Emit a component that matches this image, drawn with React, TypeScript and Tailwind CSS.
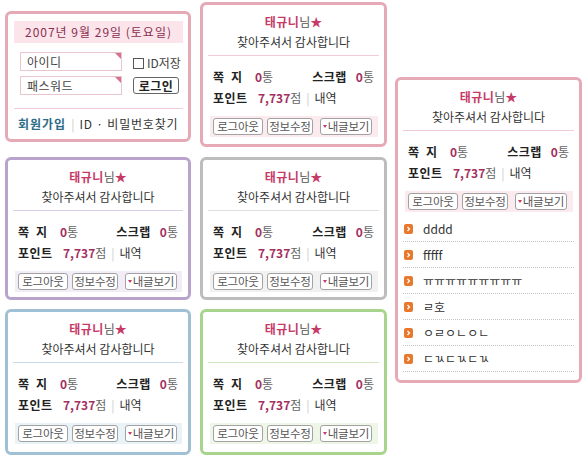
import React from "react";

type Theme = { border: string; divider: string; tint: string };

const themes: Record<string, Theme> = {
  pink: { border: "border-[#e6a9b6]", divider: "bg-[#f1ccd5]", tint: "bg-[#fbeaee]" },
  purple: { border: "border-[#b9a3cd]", divider: "bg-[#d9cfe4]", tint: "bg-[#f1ecf6]" },
  gray: { border: "border-[#bdbdbd]", divider: "bg-[#dedede]", tint: "bg-[#f1f1f1]" },
  blue: { border: "border-[#a0c1d5]", divider: "bg-[#c7dce8]", tint: "bg-[#e9f2f7]" },
  green: { border: "border-[#a9d48d]", divider: "bg-[#d0e7c0]", tint: "bg-[#eef7e7]" },
};

const posts = ["dddd", "fffff", "ㅠㅠㅠㅠㅠㅠㅠㅠㅠ", "ㄹ호", "ㅇㄹㅇㄴㅇㄴ", "ㄷㄳㄷㄳㄷㄳ"];

function SmallButton({ children, className }: { children: React.ReactNode; className?: string }) {
  return (
    <div
      className={`flex h-[17px] items-center justify-center whitespace-nowrap rounded-[3px] border border-[#a2a2a2] bg-white text-[11.5px] leading-none tracking-[-0.2px] text-[#555] ${className ?? ""}`}
    >
      {children}
    </div>
  );
}

function Bullet() {
  return (
    <svg width="9" height="10" viewBox="0 0 9 10" className="shrink-0">
      <rect x="0" y="0" width="9" height="10" rx="2" fill="#e8782c" />
      <path d="M3.5 3 L5.5 5 L3.5 7" stroke="#fff" strokeWidth="1.2" fill="none" />
    </svg>
  );
}

function Profile({ t }: { t: Theme }) {
  return (
    <>
      <div className="pt-[9px] text-center leading-4">
        <div>
          <span className="font-bold tracking-[0.5px] text-[#c63a68]">태규니</span>
          <span className="text-[#555]">님</span>
          <span className="text-[#c63a68]">★</span>
        </div>
        <div className="mt-1 text-[#333]">찾아주셔서 감사합니다</div>
      </div>
      <div className={`mx-[5px] mt-[5px] h-px ${t.divider}`} />
      <div className="mt-[13px] flex justify-between px-[10px] leading-4">
        <div className="flex">
          <span className="w-[42px] font-bold tracking-[0.5px] text-[#222]">쪽&nbsp;&nbsp;지</span>
          <span className="font-bold text-[#a3305f]">0</span>
          <span className="text-[#666]">통</span>
        </div>
        <div className="flex">
          <span className="font-bold tracking-[0.5px] text-[#222]">스크랩</span>
          <span className="ml-[9px] font-bold text-[#a3305f]">0</span>
          <span className="text-[#666]">통</span>
        </div>
      </div>
      <div className="mt-[5px] flex px-[10px] leading-4">
        <span className="w-[45px] font-bold tracking-[0.5px] text-[#222]">포인트</span>
        <span className="font-bold text-[#a3305f]">7,737</span>
        <span className="text-[#666]">점</span>
        <span className="mx-[5px] text-[#ccc]">|</span>
        <span className="text-[#333]">내역</span>
      </div>
      <div className={`ml-[7px] mr-[6px] mt-[10px] flex h-[21px] items-center pl-[3px] ${t.tint}`}>
        <SmallButton className="w-[50px]">로그아웃</SmallButton>
        <SmallButton className="ml-[4px] w-[46px]">정보수정</SmallButton>
        <SmallButton className="ml-[7px] w-[52px]">
          <span className="mr-[1px] h-0 w-0 border-x-[2.5px] border-t-[3px] border-x-transparent border-t-[#c63a68]" />
          내글보기
        </SmallButton>
      </div>
    </>
  );
}

function Card({ theme, className }: { theme: string; className: string }) {
  const t = themes[theme];
  return (
    <div className={`rounded-[6px] border-[3px] bg-white ${t.border} ${className}`}>
      <Profile t={t} />
    </div>
  );
}

function LoginBox() {
  return (
    <div className="mt-[11px] h-[131px] rounded-[6px] border-[3px] border-[#e6a9b6] bg-white pt-[7px]">
      <div className="ml-[6px] flex h-[22px] w-[169px] items-center justify-center bg-[#fbe5ea] tracking-[1px] text-[#8a2f52]">
        2007년 9월 29일 (토요일)
      </div>
      <div className="ml-[12px] mt-[9px] flex">
        <div>
          <div className="relative flex h-[19px] w-[102px] items-center border border-[#e8c6ce] pl-[6px] tracking-[0.5px] text-[#444]">
            아이디
            <span className="absolute right-0 top-0 h-0 w-0 border-l-[6px] border-t-[6px] border-l-transparent border-t-[#d9708f]" />
          </div>
          <div className="relative mt-[5px] flex h-[19px] w-[102px] items-center border border-[#e8c6ce] pl-[6px] tracking-[0.5px] text-[#444]">
            패스워드
            <span className="absolute right-0 top-0 h-0 w-0 border-l-[6px] border-t-[6px] border-l-transparent border-t-[#d9708f]" />
          </div>
        </div>
        <div className="ml-[11px]">
          <div className="mt-[5px] flex items-center">
            <span className="h-[11px] w-[11px] border border-[#555] bg-white" />
            <span className="ml-[3px] leading-none text-[#444]">ID저장</span>
          </div>
          <div className="mt-[8px] flex h-[17px] w-[46px] items-center justify-center rounded-[3px] border border-[#666] bg-white font-bold leading-none tracking-[0.5px] text-[#222]">
            로그인
          </div>
        </div>
      </div>
      <div className="ml-[6px] mt-[13px] h-px w-[169px] bg-[#f1ccd5]" />
      <div className="ml-[10px] mt-[7px] flex items-center leading-4">
        <span className="font-bold tracking-[1px] text-[#2b6c86]">회원가입</span>
        <span className="mx-[5px] text-[#ccc]">|</span>
        <span className="tracking-[0.8px] text-[#333]">ID · 비밀번호찾기</span>
      </div>
    </div>
  );
}

export default function App() {
  return (
    <div className="flex h-[459px] w-[586px] bg-white font-['Noto_Sans_CJK_KR',sans-serif] text-[12px]">
      <div className="ml-[5px] w-[186px]">
        <LoginBox />
        <Card theme="purple" className="mt-[15px] h-[143px]" />
        <Card theme="blue" className="mt-[9px] h-[146px]" />
      </div>
      <div className="ml-[9px] w-[187px]">
        <Card theme="pink" className="mt-[2px] h-[145px]" />
        <Card theme="gray" className="mt-[10px] h-[143px]" />
        <Card theme="green" className="mt-[9px] h-[146px]" />
      </div>
      <div className="ml-[8px] w-[187px]">
        <div className="mt-[77px] h-[306px] rounded-[6px] border-[3px] border-[#e6a9b6] bg-white">
          <Profile t={themes.pink} />
          <ul className="mx-[5px] mt-[4px]">
            {posts.map((p) => (
              <li key={p} className="flex h-[26px] items-center border-b border-dotted border-[#c4c4c4] pl-[1px]">
                <Bullet />
                <span className="ml-[10px] text-[#333]">{p}</span>
              </li>
            ))}
          </ul>
        </div>
      </div>
    </div>
  );
}
